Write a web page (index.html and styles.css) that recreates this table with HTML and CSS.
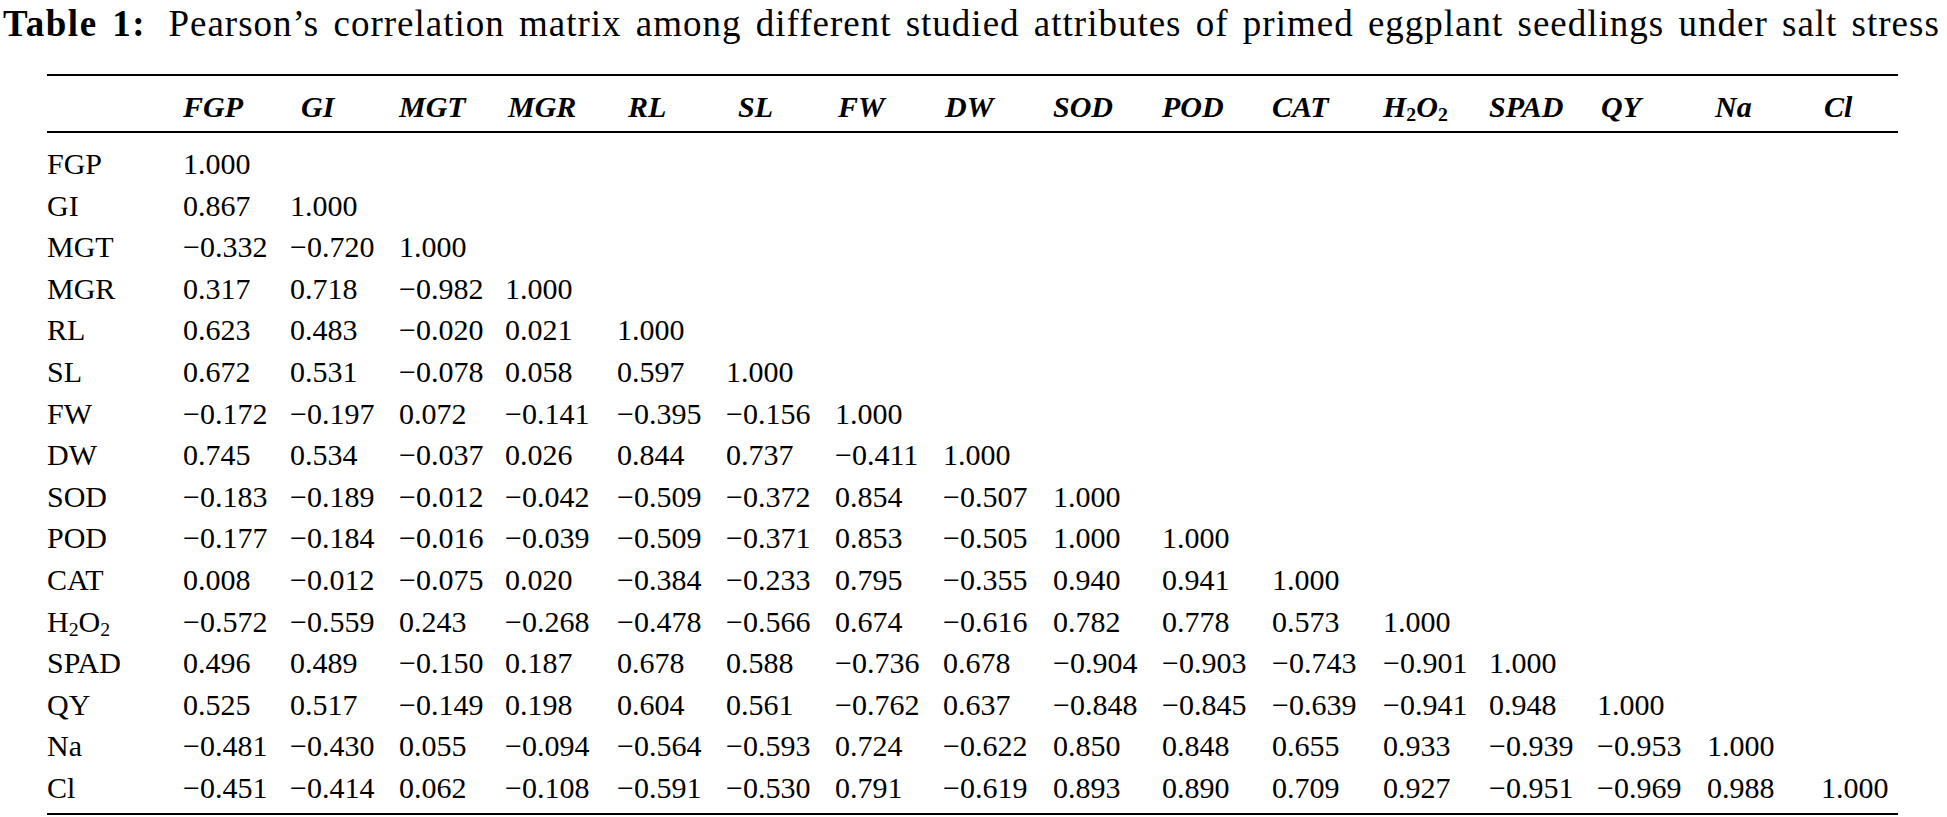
FILE: index.html
```html
<!DOCTYPE html>
<html lang="en">
<head>
<meta charset="utf-8">
<title>Table 1: Pearson’s correlation matrix</title>
<link rel="stylesheet" href="styles.css">
</head>
<body>
<div class="page">
  <p class="caption"><span class="caption-label">Table 1:</span> Pearson’s correlation matrix among different studied attributes of primed eggplant seedlings under salt stress</p>
  <table class="matrix">
    <colgroup>
      <col><col><col><col><col><col><col><col><col><col><col><col><col><col><col><col><col>
    </colgroup>
    <thead>
      <tr>
        <th></th>
        <th>FGP</th>
        <th class="hd-gi">GI</th>
        <th>MGT</th>
        <th class="hd-mgr">MGR</th>
        <th class="hd-rl">RL</th>
        <th class="hd-sl">SL</th>
        <th class="hd-fw">FW</th>
        <th class="hd-dw">DW</th>
        <th>SOD</th>
        <th>POD</th>
        <th>CAT</th>
        <th>H<sub>2</sub>O<sub>2</sub></th>
        <th>SPAD</th>
        <th class="hd-qy">QY</th>
        <th class="hd-na">Na</th>
        <th class="hd-cl">Cl</th>
      </tr>
    </thead>
    <tbody>
      <tr><td>FGP</td><td>1.000</td><td></td><td></td><td></td><td></td><td></td><td></td><td></td><td></td><td></td><td></td><td></td><td></td><td></td><td></td><td></td></tr>
      <tr><td>GI</td><td>0.867</td><td>1.000</td><td></td><td></td><td></td><td></td><td></td><td></td><td></td><td></td><td></td><td></td><td></td><td></td><td></td><td></td></tr>
      <tr><td>MGT</td><td>−0.332</td><td>−0.720</td><td>1.000</td><td></td><td></td><td></td><td></td><td></td><td></td><td></td><td></td><td></td><td></td><td></td><td></td><td></td></tr>
      <tr><td>MGR</td><td>0.317</td><td>0.718</td><td>−0.982</td><td>1.000</td><td></td><td></td><td></td><td></td><td></td><td></td><td></td><td></td><td></td><td></td><td></td><td></td></tr>
      <tr><td>RL</td><td>0.623</td><td>0.483</td><td>−0.020</td><td>0.021</td><td>1.000</td><td></td><td></td><td></td><td></td><td></td><td></td><td></td><td></td><td></td><td></td><td></td></tr>
      <tr><td>SL</td><td>0.672</td><td>0.531</td><td>−0.078</td><td>0.058</td><td>0.597</td><td>1.000</td><td></td><td></td><td></td><td></td><td></td><td></td><td></td><td></td><td></td><td></td></tr>
      <tr><td>FW</td><td>−0.172</td><td>−0.197</td><td>0.072</td><td>−0.141</td><td>−0.395</td><td>−0.156</td><td>1.000</td><td></td><td></td><td></td><td></td><td></td><td></td><td></td><td></td><td></td></tr>
      <tr><td>DW</td><td>0.745</td><td>0.534</td><td>−0.037</td><td>0.026</td><td>0.844</td><td>0.737</td><td>−0.411</td><td>1.000</td><td></td><td></td><td></td><td></td><td></td><td></td><td></td><td></td></tr>
      <tr><td>SOD</td><td>−0.183</td><td>−0.189</td><td>−0.012</td><td>−0.042</td><td>−0.509</td><td>−0.372</td><td>0.854</td><td>−0.507</td><td>1.000</td><td></td><td></td><td></td><td></td><td></td><td></td><td></td></tr>
      <tr><td>POD</td><td>−0.177</td><td>−0.184</td><td>−0.016</td><td>−0.039</td><td>−0.509</td><td>−0.371</td><td>0.853</td><td>−0.505</td><td>1.000</td><td>1.000</td><td></td><td></td><td></td><td></td><td></td><td></td></tr>
      <tr><td>CAT</td><td>0.008</td><td>−0.012</td><td>−0.075</td><td>0.020</td><td>−0.384</td><td>−0.233</td><td>0.795</td><td>−0.355</td><td>0.940</td><td>0.941</td><td>1.000</td><td></td><td></td><td></td><td></td><td></td></tr>
      <tr><td>H<sub>2</sub>O<sub>2</sub></td><td>−0.572</td><td>−0.559</td><td>0.243</td><td>−0.268</td><td>−0.478</td><td>−0.566</td><td>0.674</td><td>−0.616</td><td>0.782</td><td>0.778</td><td>0.573</td><td>1.000</td><td></td><td></td><td></td><td></td></tr>
      <tr><td>SPAD</td><td>0.496</td><td>0.489</td><td>−0.150</td><td>0.187</td><td>0.678</td><td>0.588</td><td>−0.736</td><td>0.678</td><td>−0.904</td><td>−0.903</td><td>−0.743</td><td>−0.901</td><td>1.000</td><td></td><td></td><td></td></tr>
      <tr><td>QY</td><td>0.525</td><td>0.517</td><td>−0.149</td><td>0.198</td><td>0.604</td><td>0.561</td><td>−0.762</td><td>0.637</td><td>−0.848</td><td>−0.845</td><td>−0.639</td><td>−0.941</td><td>0.948</td><td>1.000</td><td></td><td></td></tr>
      <tr><td>Na</td><td>−0.481</td><td>−0.430</td><td>0.055</td><td>−0.094</td><td>−0.564</td><td>−0.593</td><td>0.724</td><td>−0.622</td><td>0.850</td><td>0.848</td><td>0.655</td><td>0.933</td><td>−0.939</td><td>−0.953</td><td>1.000</td><td></td></tr>
      <tr><td>Cl</td><td>−0.451</td><td>−0.414</td><td>0.062</td><td>−0.108</td><td>−0.591</td><td>−0.530</td><td>0.791</td><td>−0.619</td><td>0.893</td><td>0.890</td><td>0.709</td><td>0.927</td><td>−0.951</td><td>−0.969</td><td>0.988</td><td>1.000</td></tr>
    </tbody>
  </table>
</div>
</body>
</html>
```

FILE: styles.css
```css
html, body {
  margin: 0;
  padding: 0;
  background: #ffffff;
}

body {
  font-family: "Liberation Serif", "Times New Roman", serif;
  color: #000000;
}

.page {
  width: 1947px;
  height: 817px;
  overflow: hidden;
}

.caption {
  margin: 0 0 30px 0;
  padding: 4px 0 0 3px;
  font-size: 37px;
  line-height: 40px;
  letter-spacing: 1px;
  word-spacing: 4px;
  white-space: nowrap;
}

.caption-label {
  font-weight: bold;
  letter-spacing: 1.5px;
  margin-right: 8px;
}

.matrix {
  margin-left: 47px;
  width: 1851px;
  table-layout: fixed;
  border-collapse: separate;
  border-spacing: 0;
  border-top: 2px solid #000;
  border-bottom: 2px solid #000;
  font-size: 30px;
}

.matrix col:nth-child(1)  { width: 136px; }
.matrix col:nth-child(2)  { width: 107px; }
.matrix col:nth-child(3)  { width: 109px; }
.matrix col:nth-child(4)  { width: 106px; }
.matrix col:nth-child(5)  { width: 112px; }
.matrix col:nth-child(6)  { width: 109px; }
.matrix col:nth-child(7)  { width: 109px; }
.matrix col:nth-child(8)  { width: 108px; }
.matrix col:nth-child(9)  { width: 110px; }
.matrix col:nth-child(10) { width: 109px; }
.matrix col:nth-child(11) { width: 110px; }
.matrix col:nth-child(12) { width: 111px; }
.matrix col:nth-child(13) { width: 106px; }
.matrix col:nth-child(14) { width: 108px; }
.matrix col:nth-child(15) { width: 110px; }
.matrix col:nth-child(16) { width: 114px; }
.matrix col:nth-child(17) { width: 77px; }

.matrix th,
.matrix td {
  text-align: left;
  vertical-align: baseline;
  white-space: nowrap;
  padding: 0;
}

.matrix th {
  font-weight: bold;
  font-style: italic;
  line-height: 40px;
  padding-top: 11px;
  padding-bottom: 4px;
  border-bottom: 2px solid #000;
}

.matrix td {
  line-height: 41.6px;
}

.matrix tbody tr:first-child td {
  padding-top: 10px;
}

.matrix tbody tr:last-child td {
  padding-bottom: 4px;
}

.matrix sub {
  font-size: 66%;
  line-height: 0;
  vertical-align: -0.22em;
}

.matrix th sub {
  font-style: normal;
}

.hd-gi  { padding-left: 11px !important; }
.hd-mgr { padding-left: 3px !important; }
.hd-rl  { padding-left: 11px !important; }
.hd-sl  { padding-left: 12px !important; }
.hd-fw  { padding-left: 3px !important; }
.hd-dw  { padding-left: 2px !important; }
.hd-qy  { padding-left: 4px !important; }
.hd-na  { padding-left: 8px !important; }
.hd-cl  { padding-left: 3px !important; }
```
